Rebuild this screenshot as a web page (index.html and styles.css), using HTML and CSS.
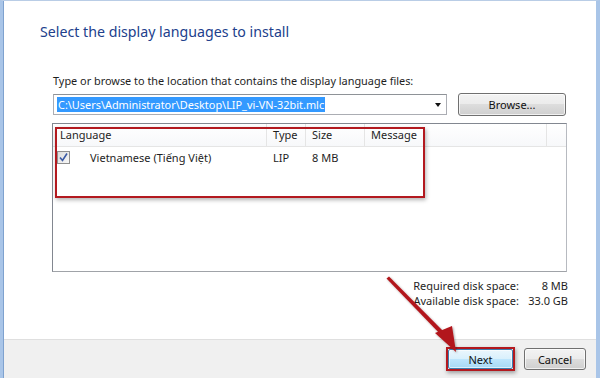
FILE: index.html
```html
<!DOCTYPE html>
<html>
<head>
<meta charset="utf-8">
<link rel="stylesheet" href="styles.css">
</head>
<body>
<div class="window">
  <div class="content">
    <h1 class="title">Select the display languages to install</h1>
    <div class="section">
      <div class="label">Type or browse to the location that contains the display language files:</div>
      <div class="pathrow">
        <div class="combo">
          <span class="sel">C:\Users\Administrator\Desktop\LIP_vi-VN-32bit.mlc</span>
          <span class="caret"></span>
        </div>
        <div class="btn browse">Browse...</div>
      </div>
      <div class="list">
        <div class="lhead">
          <div class="col c1">Language</div>
          <div class="col c2">Type</div>
          <div class="col c3">Size</div>
          <div class="col c4">Message</div>
          <div class="col c5"></div>
        </div>
        <div class="lrow">
          <div class="cell c1"><span class="check"><svg width="11" height="11" viewBox="0 0 11 11"><path d="M2 5.5 L4.5 8.5 L9 1.5" fill="none" stroke="#3b5aa5" stroke-width="1.6"/></svg></span><span class="lang">Vietnamese (Tiếng Việt)</span></div>
          <div class="cell c2">LIP</div>
          <div class="cell c3">8 MB</div>
        </div>
        <div class="mark"></div>
      </div>
      <div class="space">
        <span class="k">Required disk space:</span><span class="v">8 MB</span>
        <span class="k">Available disk space:</span><span class="v">33.0 GB</span>
      </div>
    </div>
  </div>
  <div class="footer">
    <div class="nextwrap"><div class="btn next">Next</div></div>
    <div class="btn cancel">Cancel</div>
  </div>
  <svg class="arrow" width="600" height="378" viewBox="0 0 600 378">
    <defs>
      <filter id="sh" x="-20%" y="-20%" width="140%" height="140%">
        <feDropShadow dx="1" dy="1" stdDeviation="1.2" flood-color="#000" flood-opacity="0.35"/>
      </filter>
    </defs>
    <g filter="url(#sh)" fill="#b2151b" stroke="none">
      <path d="M386.5 278.5 L389 276.5 L446 334 L443 337 Z"/>
      <path d="M435 333 L456 352 L452 326 Z"/>
    </g>
  </svg>
</div>
</body>
</html>
```

FILE: styles.css
```css
* { box-sizing: border-box; }
html, body { margin: 0; padding: 0; }
body {
  width: 600px;
  height: 378px;
  overflow: hidden;
  font-family: "Noto Sans", "Open Sans", sans-serif;
  font-size: 11px;
  color: #1e1e1e;
  background: #fff;
}
.window {
  position: relative;
  width: 600px;
  height: 378px;
  display: flex;
  flex-direction: column;
  border-left: 3px solid #a9c5e8;
  border-right: 4px solid #a9c5e8;
  border-top: 1px solid #b9cde6;
}
.window::before {
  content: "";
  position: absolute;
  left: 0; top: 0; bottom: 0;
  width: 1px;
  background: #7fa2cf;
}
.content {
  height: 338px;
  background: #fff;
  padding: 20px 0 0 37px;
}
.title {
  margin: 0;
  font-weight: normal;
  font-size: 14.2px;
  color: #21408c;
  line-height: 22px;
}
.section {
  padding: 31px 0 0 13px;
  width: 530px;
}
.label {
  line-height: 14px;
  font-size: 10.9px;
}
.pathrow {
  display: flex;
  align-items: center;
  margin-top: 5px;
  gap: 11px;
}
.combo {
  position: relative;
  width: 394px;
  height: 21px;
  border: 1px solid #abadb3;
  border-top-color: #8e9297;
  background: #fff;
  padding: 2px 2px 0 3px;
}
.sel {
  display: inline-block;
  background: #3399ff;
  color: #fff;
  line-height: 15px;
  font-size: 10.9px;
  padding: 0 1px;
}
.caret {
  position: absolute;
  right: 5px;
  top: 8px;
  width: 0; height: 0;
  border-left: 3.5px solid transparent;
  border-right: 3.5px solid transparent;
  border-top: 4px solid #111;
}
.btn {
  display: flex;
  align-items: center;
  justify-content: center;
  border: 1px solid #707070;
  border-radius: 3px;
  background: linear-gradient(#f3f3f3 0%, #ebebeb 49%, #dddddd 50%, #cfcfcf 100%);
  box-shadow: inset 0 0 0 1px rgba(255,255,255,0.7);
  color: #111;
  font-size: 11px;
}
.browse {
  width: 108px;
  height: 23px;
}
.list {
  position: relative;
  margin-top: 7px;
  margin-left: -1px;
  width: 515px;
  height: 149px;
  border: 1px solid #828790;
  border-right-color: #b7bac0;
  border-bottom-color: #a0a3a8;
  background: #fff;
}
.lhead {
  display: flex;
  height: 23px;
  border-bottom: 1px solid #e5e5e5;
  background: linear-gradient(#ffffff, #f7f8fa);
}
.col {
  line-height: 22px;
  padding-left: 7px;
  border-right: 1px solid #e5e5e5;
  font-size: 11px;
}
.c1 { width: 214px; }
.c2 { width: 39px; padding-left: 6px; }
.c3 { width: 59px; padding-left: 6px; }
.c4 { width: 182px; padding-left: 6px; }
.c5 { flex: 1; border-right: 0; }
.lrow {
  display: flex;
  height: 21px;
  align-items: center;
}
.cell {
  font-size: 11px;
  padding-left: 6px;
}
.lrow .c1 {
  display: flex;
  align-items: center;
  padding-left: 4px;
}
.check {
  display: inline-flex;
  align-items: center;
  justify-content: center;
  width: 13px;
  height: 13px;
  border: 1px solid #8f8f8f;
  background: linear-gradient(135deg, #dcdcdc, #f7f7f7);
}
.lang { margin-left: 20px; }
.mark {
  position: absolute;
  left: 2px;
  top: 3px;
  width: 370px;
  height: 71px;
  border: 2px solid #b3191f;
  box-shadow: 1px 2px 4px rgba(0,0,0,0.3);
}
.space {
  display: grid;
  grid-template-columns: auto 49px;
  justify-content: end;
  margin-top: 6px;
  width: 515px;
  line-height: 15px;
  font-size: 11px;
}
.space .k { text-align: right; }
.space .v { text-align: right; }
.footer {
  flex: 1;
  background: #f0f0f0;
  border-top: 1px solid #dfdfdf;
  display: flex;
  justify-content: flex-end;
  align-items: center;
  padding: 0 10px 0 0;
  gap: 9px;
}
.nextwrap {
  border: 2px solid #b3191f;
  box-shadow: 1px 2px 4px rgba(0,0,0,0.35);
  padding: 0;
}
.next {
  width: 65px;
  height: 20px;
  border-color: #3c7fb1;
  border-radius: 2px;
  background: linear-gradient(#eaf6fd 0%, #d9f0fc 49%, #bee6fd 50%, #a7d9f5 100%);
  box-shadow: inset 0 0 0 1px rgba(255,255,255,0.6);
}
.cancel {
  width: 62px;
  height: 22px;
}
.arrow {
  position: absolute;
  left: -3px;
  top: -1px;
  pointer-events: none;
}
```
